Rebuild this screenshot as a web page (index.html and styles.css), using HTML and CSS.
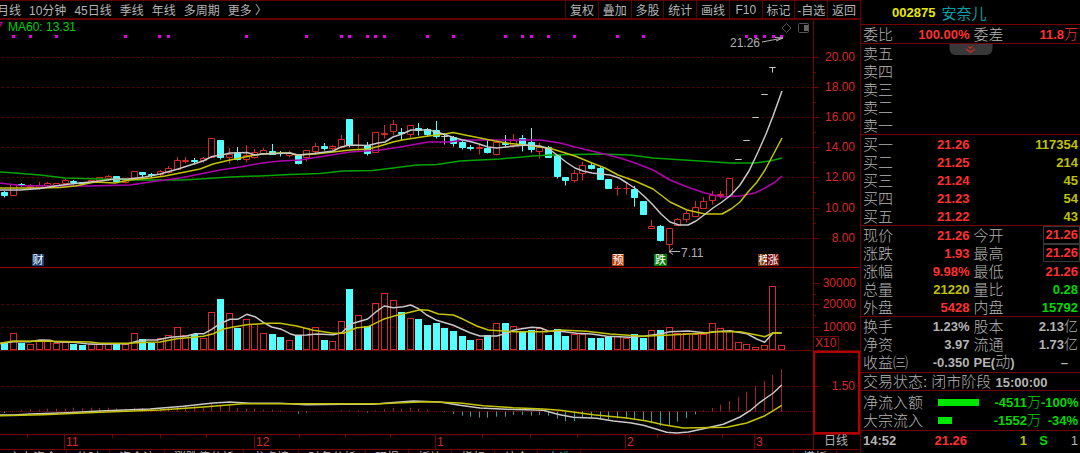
FILE: index.html
```html
<!DOCTYPE html>
<html lang="zh-CN">
<head>
<meta charset="utf-8">
<title>002875 安奈儿</title>
<link rel="stylesheet" href="styles.css">
</head>
<body>
<div class="terminal">
  <main class="charts">
    <nav class="toolbar">
      <div class="periods">
        <button>月线</button><button>10分钟</button><button>45日线</button><button>季线</button><button>年线</button><button>多周期</button><button>更多 〉</button>
      </div>
      <div class="actions">
        <button>复权</button><button>叠加</button><button>多股</button><button>统计</button><button>画线</button><button>F10</button><button>标记</button><button>-自选</button><button>返回</button>
      </div>
    </nav>

    <svg class="pane" viewBox="0 20 860 248" aria-label="日K线">
      <g id="price-grid"></g>
      <g id="candles"></g>
      <g id="price-lines"></g>
      <g id="signals"></g>
      <text class="ma20" x="-4" y="31">7</text>
      <text class="ma60" x="8" y="31">MA60: 13.31</text>
      <path class="tool" d="M786.5 23.500l4.500 4.500l-4.500 4.500l-4.500 -4.500z"/>
      <rect class="tool" x="798.500" y="23.500" width="10" height="9" rx="1"/>
      <rect class="tool-fill" x="804" y="25" width="4" height="6"/>
      <text class="note" x="730" y="47">21.26</text>
      <path class="note-line" d="M762 42L783 38M775 37.500L783 38L776 41"/>
      <text class="note" x="681" y="257">7.11</text>
      <path class="note-line" d="M669 251.500H680M673 248.500L669 251.500L673 254.500"/>
      <g class="flag">
        <rect x="32" y="254" width="12" height="12" fill="#173f70"/><text x="38" y="264">财</text>
        <rect x="612" y="254" width="12" height="12" fill="#b8430f"/><text x="618" y="264">预</text>
        <rect x="654" y="254" width="13" height="12" fill="#087a08"/><text x="660.500" y="264">跌</text>
        <rect x="758" y="254" width="12" height="12" fill="#7a3c08"/><text x="764" y="264">榜</text>
        <rect x="767" y="254" width="12" height="12" fill="#780808"/><text x="773" y="264">涨</text>
      </g>
      <path class="rule" d="M0 267.500H860"/>
    </svg>

    <svg class="pane" viewBox="0 268 860 83" aria-label="成交量">
      <g id="volume-grid"></g>
      <g id="volume-bars"></g>
      <g id="volume-lines"></g>
      <rect class="box" x="813.500" y="336.500" width="25" height="14"/>
      <text class="scale" x="815" y="347">X10</text>
      <path class="rule dim" d="M0 350.500H860"/>
    </svg>

    <svg class="pane" viewBox="0 351 860 83" aria-label="MACD">
      <g id="macd-grid"></g>
      <g id="macd-bars"></g>
      <g id="macd-lines"></g>
      <rect class="box bright" x="814" y="352" width="45" height="81"/>
    </svg>

    <svg class="pane" viewBox="0 434 860 15" aria-label="时间轴">
      <g id="time-axis"></g>
      <text class="period" x="836" y="445">日线</text>
    </svg>

    <div class="indicators">
      <span>主力资金</span><span>分时</span><span>资金流</span><span>涨跌停分析</span><span>龙虎榜</span><span>财务分析</span><span>研报</span><span>板块</span><span>指标</span><span>综合</span><span class="active">自选</span><span class="template">模板</span>
    </div>
  </main>

  <aside class="quote">
    <header class="name"><b>002875</b> <span>安奈儿</span></header>

    <table class="pairs">
      <tr><th>委比</th><td class="up">100.00%</td><th>委差</th><td class="up">11.8<span class="unit">万</span></td></tr>
    </table>

    <div class="asks">
      <table class="pairs">
        <tr><th>卖五</th><td></td><th></th><td></td></tr>
        <tr><th>卖四</th><td></td><th></th><td></td></tr>
        <tr><th>卖三</th><td></td><th></th><td></td></tr>
        <tr><th>卖二</th><td></td><th></th><td></td></tr>
        <tr><th>卖一</th><td></td><th></th><td></td></tr>
      </table>
      <button class="fold" aria-label="展开">
        <svg viewBox="0 0 12 10" width="12" height="10"><path d="M4 1.500l2 1.500l2 -1.500M1.500 4l4.500 3l4.500 -3"/></svg>
      </button>
    </div>

    <table class="pairs">
      <tr><th>买一</th><td class="up">21.26</td><th></th><td class="vol">117354</td></tr>
      <tr><th>买二</th><td class="up">21.25</td><th></th><td class="vol">214</td></tr>
      <tr><th>买三</th><td class="up">21.24</td><th></th><td class="vol">45</td></tr>
      <tr><th>买四</th><td class="up">21.23</td><th></th><td class="vol">54</td></tr>
      <tr><th>买五</th><td class="up">21.22</td><th></th><td class="vol">43</td></tr>
    </table>

    <table class="pairs">
      <tr><th>现价</th><td class="up">21.26</td><th>今开</th><td class="up"><span class="framed">21.26</span></td></tr>
      <tr><th>涨跌</th><td class="up">1.93</td><th>最高</th><td class="up"><span class="framed">21.26</span></td></tr>
      <tr><th>涨幅</th><td class="up">9.98%</td><th>最低</th><td class="up">21.26</td></tr>
      <tr><th>总量</th><td class="vol">21220</td><th>量比</th><td class="down">0.28</td></tr>
      <tr><th>外盘</th><td class="up">5428</td><th>内盘</th><td class="down">15792</td></tr>
    </table>

    <table class="pairs capital">
      <tr><th>换手</th><td>1.23%</td><th>股本</th><td>2.13<span class="unit">亿</span></td></tr>
      <tr><th>净资</th><td>3.97</td><th>流通</th><td>1.73<span class="unit">亿</span></td></tr>
      <tr><th>收益㈢</th><td>-0.350</td><th><b>PE(</b>动<b>)</b></th><td class="none">–</td></tr>
    </table>

    <p class="status">交易状态: 闭市阶段 <b>15:00:00</b></p>

    <table class="flow">
      <tr><th>净流入额</th><td class="bar"><i style="width:41px"></i></td><td>-4511<span class="unit">万</span></td><td>-100%</td></tr>
      <tr><th>大宗流入</th><td class="bar"><i style="width:14px"></i></td><td>-1552<span class="unit">万</span></td><td>-34%</td></tr>
    </table>

    <table class="ticks">
      <tr><th>14:52</th><td class="up">21.26</td><td class="vol">1</td><td class="down">S</td><td class="count">1</td></tr>
      <tr><th>14:52</th><td class="up">21.26</td><td class="vol">2</td><td class="down">S</td><td class="count">1</td></tr>
    </table>
  </aside>
</div>
<script src="chart.js"></script>
</body>
</html>
```

FILE: styles.css
```css
* { box-sizing: border-box; }

body {
  margin: 0;
  height: 100vh;
  overflow: hidden;
  background: #000;
  color: #b4b4b4;
  font-family: "Liberation Sans", "Noto Sans CJK SC", sans-serif;
  font-size: 12px;
}

button {
  margin: 0;
  padding: 0;
  border: 0;
  background: none;
  color: inherit;
  font: inherit;
  white-space: nowrap;
}

b { font-weight: 700; }

.terminal {
  display: grid;
  grid-template-columns: minmax(0, 1fr) 220px;
  min-height: 100vh;
}

/* toolbar */
.toolbar {
  display: flex;
  justify-content: space-between;
  height: 20px;
  border-top: 1px solid #5c0000;
  border-bottom: 2px solid #640000;
}
.toolbar button { padding-bottom: 1px; }
.periods { display: flex; gap: 8px; margin-left: -3px; }
.actions { display: grid; grid-template-columns: repeat(9, 1fr); width: 295px; }
.actions button { border-left: 1px solid #640000; }

/* chart panes */
.pane { display: block; width: 100%; height: auto; fill: none; }
.pane text { fill: #b0b0b0; font-size: 12px; }
.pane .ma20 { fill: #d000d0; }
.pane .ma60 { fill: #00d000; }
.pane .scale { fill: #d82828; }
.pane .end { text-anchor: end; }
.pane .period { text-anchor: middle; }
.pane .flag text { fill: #fff; font-size: 11px; text-anchor: middle; }
.tool { stroke: #555; }
.tool-fill { fill: #666; }
.note-line { stroke: #b0b0b0; }
.rule { stroke: #980000; }
.rule.dim { stroke: #640000; }
.box { stroke: #780000; }
.box.bright { stroke: #b00000; stroke-width: 2; }
.dots { stroke: #640000; stroke-dasharray: 2 3; }
.dots.dense { stroke: #780000; stroke-dasharray: 1 1; }
.axis { stroke: #780000; }
.up-shape { stroke: #d82828; }
.down-shape { stroke: #54ffff; fill: #54ffff; }
.flat-shape { stroke: #c8c8c8; }
.dot { fill: #e800e8; }
.line { stroke-width: 1.5; stroke-linejoin: round; }
.white { stroke: #c8c8c8; }
.yellow { stroke: #c4c400; }
.purple { stroke: #b000b0; }
.green { stroke: #00a400; }
.hist-up { stroke: #a82020; }
.hist-down { stroke: #38a0a0; }

.indicators {
  display: flex;
  height: 18px;
  border-top: 1px solid #780000;
  line-height: 16px;
  white-space: nowrap;
}
.indicators span { padding: 0 9px; border-right: 1px solid #640000; }
.indicators .active { color: #38a0a0; }
.indicators .template { margin-left: auto; margin-right: 23px; border-left: 1px solid #640000; }

/* quote panel */
.quote { border-left: 1px solid #640000; font-size: 13px; }
.quote > * { border-top: 1px solid #780000; }
.quote > .name {
  display: flex;
  gap: 6px;
  align-items: center;
  height: 24px;
  padding-left: 31px;
  border-top: 0;
  color: #e8e800;
}
.name span { color: #00a0a8; font-size: 15px; }

table {
  width: 100%;
  border-collapse: separate;
  border-spacing: 0;
  table-layout: fixed;
}
tr { height: 18px; }
th, td {
  padding: 0;
  height: 18px;
  line-height: 17px;
  white-space: nowrap;
}
th { width: 50px; padding-left: 2px; text-align: left; font-weight: 300; font-size: 15px; }
th + td + th { width: 52px; padding-left: 4px; }
th b { font-size: 13px; }
td { text-align: right; font-weight: 700; }
.pairs td:last-child, .flow td:last-child { padding-right: 2px; }
.pairs td.none:last-child { padding-right: 12px; }
.up { color: #ff3030; }
.down { color: #00d800; }
.vol { color: #c0c000; }
.unit { font-size: 14px; font-weight: 300; line-height: 1; }
.framed { display: inline-block; height: 18px; margin-right: -2px; padding: 0 1px; border: 1px solid #383838; line-height: 16px; }

.asks { position: relative; }
.fold {
  position: absolute;
  top: 0;
  left: 50%;
  width: 43px;
  height: 11px;
  transform: translateX(-50%);
  border-radius: 0 0 6px 6px;
  background: #383838;
}
.fold svg { display: block; margin: 0 auto; fill: none; stroke: #d02828; stroke-width: 1.5; }

.capital { padding-bottom: 1px; }
.status { margin: 0; height: 18px; padding-left: 2px; font-size: 15px; font-weight: 300; line-height: 17px; white-space: nowrap; }
.status b { font-size: 13px; }

.flow { padding: 2px 0 1px; }
.flow th { width: 77px; }
.flow .bar { width: 44px; }
.flow .bar i { display: block; height: 7px; background: #00e800; }
.flow td { color: #00d800; }
.flow td:last-child { width: 39px; }

.ticks th { width: 52px; font-size: 13px; font-weight: 700; }
.ticks td:nth-child(2) { width: 54px; }
.ticks td:nth-child(3) { width: 60px; }
.ticks td:nth-child(4) { width: 21px; }
.ticks .count { padding-right: 2px; font-weight: 400; }
```

FILE: chart.js
```js
const NS = "http://www.w3.org/2000/svg";

function add(id, tag, attrs, text) {
  const el = document.createElementNS(NS, tag);
  for (const key in attrs) el.setAttribute(key, attrs[key]);
  if (text) el.textContent = text;
  document.getElementById(id).append(el);
}
const path = (id, cls, d) => add(id, "path", { class: cls, d });
const line = (id, color, pts) => add(id, "polyline", { class: "line " + color, points: pts });
const dayX = i => Math.round(4.2 + 8.63 * i) + 0.5;

/* Joins line sections that were sampled in thirds of a unit from an origin. */
function sections(list) {
  return list.map(([origin, pts]) =>
    pts.split(" ").map(p => {
      const [x, y] = p.split(",").map(Number);
      return (origin + x / 3).toFixed(1) + "," + (265 + y / 3).toFixed(1);
    }).join(" ")).join(" ");
}

/* Price: kind, body top, body bottom, high, low */
const days = `c192,195,191,197 r184,195 c184,185,183,186 r186,187,184,189 r185,187,182,189 r183,185,182,187 r183,185
r180,183,179,184 c181,182,180,184 c182,183 r180,182 r177,180 r176,178,175,180 c176,181 r180,182,179,183 r171,178
c172,174,172,178 c174,175,173,177 r171,174,170,176 r168,172,166,173 r160,169,157,169 r160,161,157,163 c160,161,158,164
r158,160,157,162 r138,157 c140,157,140,159 r154,157,148,163 c153,159,147,160 r155,159,145,162 r152,157,149,158
r150,153,148,154 c151,154,144,154 c153,153,151,156 r153,155,151,157 c155,163,155,164 r150,157,150,161 r146,151,143,154
c146,148,143,150 r146,148,145,150 r139,147,135,148 c119,145,119,147 r145,145,134,150 c145,153,142,155 r132,152
r133,134,125,138 r124,131,120,135 c132,133,128,140 r125,134,125,138 c128,130,123,135 c129,134,128,136 c130,136,121,138
w136,136,133,144 c137,143,136,146 c142,147,140,149 c147,148,145,150 r147,148,144,154 c148,152,140,153 r142,154,140,155
c143,144,135,147 r140,145,134,147 c138,145,135,151 c142,149,128,152 r147,151,143,158 c147,157,146,157 c155,176,154,178
c177,180,177,185 r173,180,170,182 r165,173,162,180 c165,168,162,169 c168,179,167,179 c179,188 r188,188,186,195
r188,188,183,194 c189,197,186,206 c201,214 r226,228,220,228 c226,240,225,241 r228,244,228,252 r219,225,218,225
r213,219,211,222 r207,216,201,216 r201,208,197,208 r195,200,191,204 r194,195,191,198 r178,196 w159,159 w140,140
w117,117 w94,94 w67,67,67,72`.split(/\s+/);

[57, 87, 117, 147, 177, 208, 238].forEach((y, i) => {
  path("price-grid", "dots", `M2 ${y + 0.5}H813`);
  path("price-grid", "axis", `M813 ${y + 0.5}H819`);
  if (i < 6) path("price-grid", "axis", `M813 ${y + 15.5}H816`);
  add("price-grid", "text", { class: "scale end", x: 855, y: y + 4 }, (20 - 2 * i) + ".00");
});
path("price-grid", "axis", "M813.5 20V268");

const shape = { r: "up-shape", c: "down-shape", w: "flat-shape" };
days.forEach((day, i) => {
  const [top, bottom, high = top, low = bottom] = day.slice(1).split(",").map(Number);
  const x = dayX(i);
  path("candles", shape[day[0]],
    `M${x} ${high}V${top}M${x} ${bottom}V${+low + 0.5}M${x - 3} ${top + 0.5}H${x + 3}V${bottom + 0.5}H${x - 3}Z`);
});
[13, 30, 56, 125, 159, 168, 246, 306, 341, 349, 367, 375, 384, 427, 453, 505, 522, 531, 548, 574, 617, 643, 746, 755, 764, 773, 781].forEach(x =>
  add("signals", "rect", { class: "dot", x: x - 1, y: 35, width: 3, height: 3 }));

line("price-lines", "green", "0,172 15,173 40,175 65,178 100,179 140,180 180,180 200,179 230,177 270,175.600 290,174.500 320,173.500 343,171 373,170.500 417,165 437,164.500 460,161 500,159 533,156 550,155 600,154 630,155 653,158 700,161 730,163 755,163 770,161 782,158");
line("price-lines", "purple", "0,183 20,185.500 50,186 90,186 130,185 150,182 180,178 205,173 220,170 240,167 262,163 280,161 300,160 325,156 350,152 380,150 400,147 428,142 450,142 463,140 540,140 560,143 575,147 600,153 620,158 635,163 653,170 670,180 687,187 705,193 722,197 740,196 755,193 765,188 775,182 782,176");
line("price-lines", "yellow", "0,188 40,188 60,187.500 75,186 95,182 115,183 130,180 150,178 165,176 180,173 200,169 213,164 230,160 250,156 262,154 280,153 290,153 296,155 315,154 333,152 350,150 368,149 380,146 393,142 402,140 415,138 428,136 445,134 453,132.500 465,135 480,138 495,141 510,143.500 525,145 540,147 549,148 575,156 592,163 605,168 618,175 635,181 653,189 670,202 687,210 705,214 722,214 731,209 740,202 748,192 757,182 765,170 773,155 782,138");
line("price-lines", "white", "0,190 20,190 40,188.500 55,186 70,184 85,182.500 100,181 115,179 128,179 145,177 160,174 178,169 203,161 212,156.500 222,155 230,153 247,152.500 255,155 263,154 290,153 298,155 310,154 333,151 341,147 350,145 368,145.500 378,143 385,142 393,137 402,134 411,130 429,130 437,132 446,135 455,138 463,140 472,142 479,144 488,147 497,148 506,147 515,146 525,145 540,146 549,149 557,155 566,162 575,168 583,171 592,173 610,175 619,178 627,183 636,189 645,197 653,205 661,214 670,222 679,225 688,225 696,221 704,215 713,208 722,202 731,195 740,185 749,171 758,152 766,134 773,116 782,91");

/* Volume: kind and bar top, in thirds below the pane origin */
const volumes = `c232 r203 c234 r237 r228 r228 r234 r232 c236 c240 r237 r237 r237 c236 r236 r203 c221 c233 r220 r209 r186
r209 c207 r220 r141 c102 r145 c189 r161 r178 r203 c206 c217 r226 c211 r190 r186 c226 r229 r167 c73 r149 c184 r115 r85
r104 c142 r158 c161 c181 c175 c189 c198 c214 c225 r223 c210 r175 c175 r184 c201 c196 r190 c211 c192 c214 r208 r207
c220 c220 c217 r212 r218 c206 c219 r194 c195 r187 r203 r203 r207 r206 r175 r190 r198 r232 r237 r245 r241 r64 r239`.split(/\s+/);

[["30000", 283], ["20000", 304], ["10000", 327]].forEach(([label, y], i) => {
  if (i) path("volume-grid", "dots", `M2 ${y + 0.5}H813`);
  path("volume-grid", "axis", `M813 ${y + 0.5}H819`);
  if (i < 2) path("volume-grid", "axis", `M813 ${y + 11.5}H816`);
  add("volume-grid", "text", { class: "scale end", x: 856, y: y + 4 }, label);
});
path("volume-grid", "axis", "M813.5 268V351");
volumes.forEach((bar, i) => {
  const y = Math.round(265 + bar.slice(1) / 3) + 0.5;
  add("volume-bars", "rect", { class: shape[bar[0]], x: dayX(i) - 3, y, width: 6, height: 349.5 - y });
});
line("volume-lines", "white", sections([
  [0, "0,236 40,230 90,230 120,225 150,226 165,231 220,232 260,236 290,238 385,236 410,229 440,225 470,225 510,217 560,213 585,206 612,206 635,193 660,176 690,163 713,163 740,148 765,155 790,172 815,186 840,192"],
  [280, "0,191 30,206 45,211 80,210 110,207 160,209 185,203 212,177 240,169 263,162 290,139 313,123 340,128 370,125 392,120 415,131 440,150 470,166 520,181 570,203 600,213 650,213 680,205 700,196 725,191 755,187 780,188 805,198 830,199"],
  [560, "0,199 50,205 95,207 140,214 210,217 255,213 300,207 330,200 385,198 440,204 460,200 510,197 560,206 590,222 614,232 640,203 665,204"]]));
line("volume-lines", "yellow", sections([
  [0, "0,235 40,228 150,229 270,231 300,235 385,235 440,232 480,231 530,221 610,214 640,206 670,192 700,186 740,179 800,175"],
  [280, "0,175 50,183 100,196 160,205 190,205 230,188 265,185 310,163 345,152 390,142 420,134 445,136 475,147 520,150 550,163 590,183 625,195 700,200 800,200"],
  [560, "0,195 80,199 150,207 250,214 330,210 430,205 470,200 540,200 590,210 614,215 640,203 665,204"]]));

/* MACD histogram ends, in thirds below the pane origin; the zero line is at 439 */
const hist = [444, 439, 436, 433, 434, 431, 431, 431, 428, 430, 428, 429, 428, 430, 431, 428, 429, 431, 429, 427, 424,
  424, 422, 425, 415, 421, 421, 429, 431, 431, 434, 434, 436, 439, 446, 443, 439, 439, 439, 436, 436, 436, 443, 436,
  433, 428, 431, 428, 431, 434, 439, 442, 447, 452, 455, 458, 458, 455, 455, 450, 450, 452, 450, 452, 461, 469, 468,
  460, 459, 462, 462, 460, 462, 464, 468, 475, 482, 482, 470, 459, 448, 436, 429, 419, 408, 395, 380, 363, 347, 330, 313];

path("macd-grid", "dots", "M2 386.5H813");
path("macd-grid", "dots dense", "M0 411.5H813");
path("macd-grid", "axis", "M814 386.5H819");
add("macd-grid", "text", { class: "scale end", x: 855, y: 390 }, "1.50");
hist.forEach((end, i) => {
  if (end !== 439) path("macd-bars", end < 439 ? "hist-up" : "hist-down", `M${dayX(i)} 411.5V${(265 + end / 3).toFixed(1)}`);
});
line("macd-lines", "white", sections([
  [0, "0,450 40,450 90,447 200,443 300,438 450,432 550,424 640,414 690,411 750,415 840,415"],
  [280, "0,415 80,419 240,417 280,418 330,413 400,408 480,411 540,421 600,429 680,433 790,436 830,447"],
  [560, "0,449 40,457 110,460 160,468 210,473 250,481 290,493 320,502 350,504 385,501 430,491 490,478 540,456 570,437 600,412 640,384 665,360"]]));
line("macd-lines", "yellow", sections([
  [0, "0,452 130,449 300,442 480,435 610,426 730,416"],
  [280, "0,416 300,416 400,412 450,410 540,414 610,422 700,428 790,432"],
  [560, "0,436 100,449 200,459 260,468 310,479 370,489 500,487 560,474 615,452 640,437 665,421"]]));

/* Time axis */
path("time-axis", "axis", "M0 434.5H860M813.5 434V450");
[27, 112, 160, 206, 299, 345, 390, 482, 530, 577, 657, 689, 722].forEach(x =>
  path("time-axis", "axis", `M${x + 0.5} 434V438`));
[["11", 64], ["12", 254], ["1", 435], ["2", 625], ["3", 754]].forEach(([label, x]) => {
  path("time-axis", "axis", `M${x + 0.5} 434V450`);
  add("time-axis", "text", { class: "scale", x: x + 2, y: 446 }, label);
});
```
